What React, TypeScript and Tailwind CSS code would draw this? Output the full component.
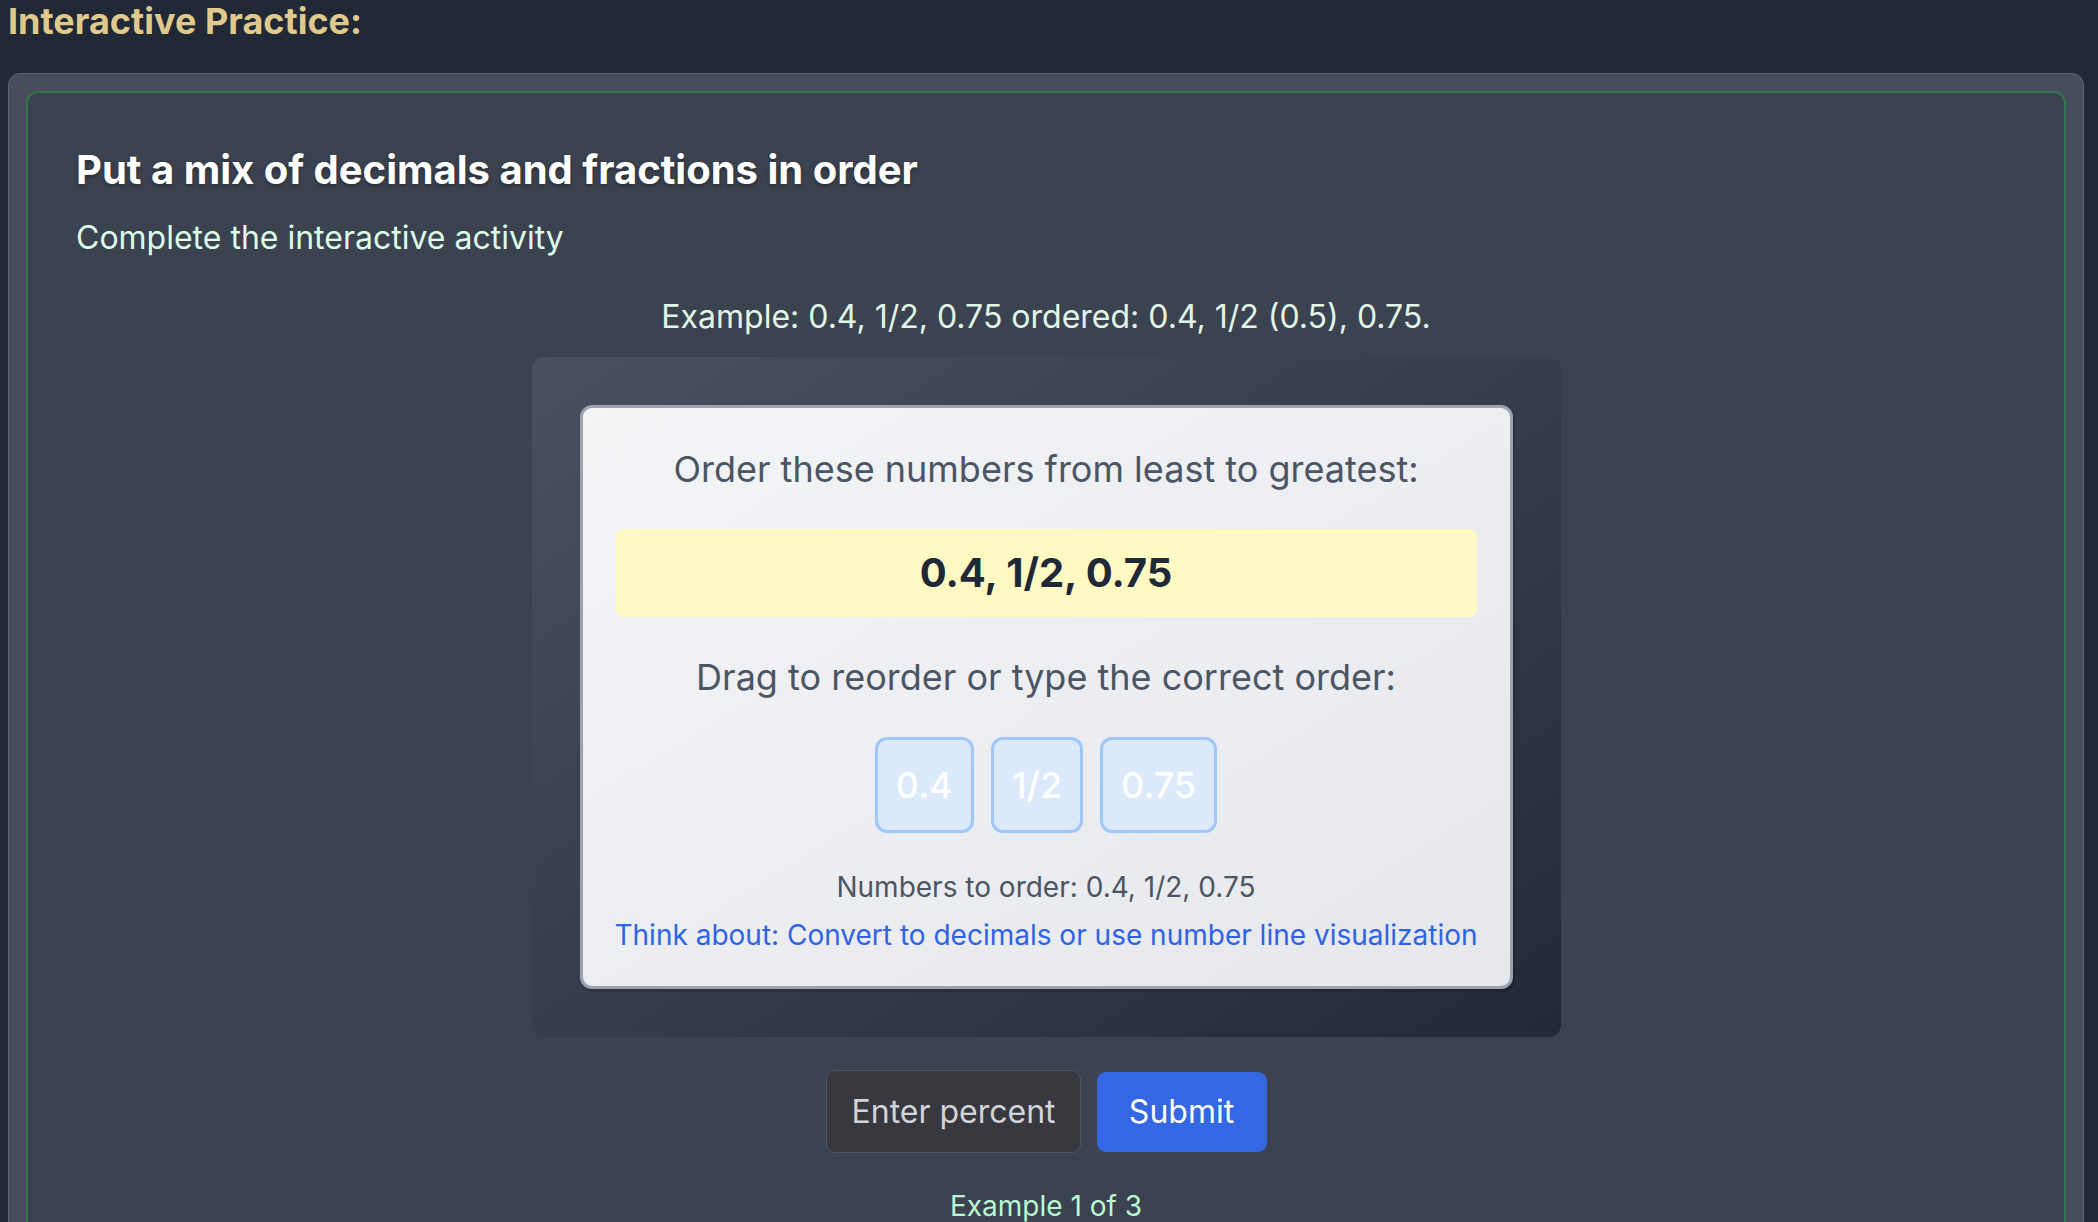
import { useState } from "react";

const numbers = ["0.4", "1/2", "0.75"];

function NumberChip({ value }: { value: string }) {
  return (
    <div className="cursor-grab rounded-[12px] border-[3px] border-[#9fc7f8] bg-[#dce9fb] px-[18px] py-[18px] text-[36px] font-medium leading-[54px] text-white">
      {value}
    </div>
  );
}

function OrderingCard() {
  return (
    <div className="rounded-[12px] border-[3px] border-[#9ca3af] bg-gradient-to-br from-[#f3f4f6] to-[#e5e7eb] px-[33px] pb-[30px] pt-[37px] text-center shadow-[2px_3px_0_rgba(0,0,0,0.15)]">
      <p className="text-[36px] leading-[48px] text-[#4b5563]">
        Order these numbers from least to greatest:
      </p>
      <div className="mt-[36px] rounded-[8px] bg-[#fef9c3] py-[19px] text-[40px] font-bold leading-[50px] text-[#1f2937]">
        {numbers.join(", ")}
      </div>
      <p className="mt-[36px] text-[36px] leading-[48px] text-[#4b5563]">
        Drag to reorder or type the correct order:
      </p>
      <div className="mt-[36px] flex justify-center gap-[17px]">
        {numbers.map((n) => (
          <NumberChip key={n} value={n} />
        ))}
      </div>
      <p className="mt-[33px] text-[28px] leading-[42px] text-[#4b5563]">
        Numbers to order: {numbers.join(", ")}
      </p>
      <p className="-mx-[4px] mt-[6px] whitespace-nowrap text-[28px] leading-[42px] text-[#2f63e6]">
        Think about: Convert to decimals or use number line visualization
      </p>
    </div>
  );
}

export default function App() {
  const [answer, setAnswer] = useState("");

  return (
    <div className="h-screen overflow-hidden bg-[#212836] pl-[8px] pr-[14px] font-['Inter',sans-serif]">
      <h2 className="text-[36px] font-bold leading-[42px] text-[#dfc98c]">Interactive Practice:</h2>

      <div className="mt-[31px] rounded-[12px] border-[1.5px] border-[#5d6371] bg-[#474d5a] p-[17px]">
        <div className="rounded-[12px] border-[2px] border-[#33754a] bg-[#3c4350] px-[48px] pb-[48px] pt-[49px]">
          <h3 className="text-[40px] font-bold leading-[56px] text-white [text-shadow:0_2px_4px_rgba(0,0,0,0.35)]">
            Put a mix of decimals and fractions in order
          </h3>
          <p className="mt-[16px] text-[32px] leading-[48px] text-[#dcfce7]">Complete the interactive activity</p>

          <p className="mt-[31px] text-center text-[32px] leading-[48px] text-[#e0f6e6]">
            Example: 0.4, 1/2, 0.75 ordered: 0.4, 1/2 (0.5), 0.75.
          </p>

          <div className="mx-auto mt-[16px] w-[1029px] rounded-[12px] bg-gradient-to-br from-[#4a5061] to-[#232a37] p-[48px]">
            <OrderingCard />
          </div>

          <div className="mt-[33px] flex items-center justify-center gap-[16px]">
            <input
              value={answer}
              onChange={(e) => setAnswer(e.target.value)}
              placeholder="Enter percent"
              className="h-[83px] w-[255px] rounded-[9px] border-[1.5px] border-[#4b5563] bg-[#37393f] px-[25px] text-[32px] text-white outline-none placeholder:text-[#d4d4d8]"
            />
            <button className="h-[80px] w-[170px] rounded-[9px] bg-[#3367e3] text-[32px] text-white">Submit</button>
          </div>

          <p className="mt-[32px] text-center text-[28px] leading-[42px] text-[#bbf7d0]">Example 1 of 3</p>
        </div>
      </div>
    </div>
  );
}
